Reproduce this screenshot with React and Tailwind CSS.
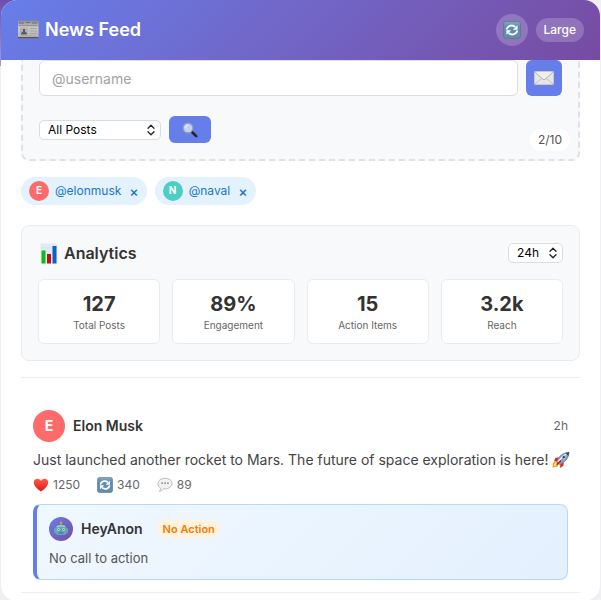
import React from "react";

function NewspaperIcon() {
  return (
    <svg width="22" height="22" viewBox="0 0 22 22" aria-hidden="true">
      <defs>
        <linearGradient id="paper" x1="0" y1="0" x2="0" y2="1">
          <stop offset="0" stopColor="#8c8c8c" />
          <stop offset="0.4" stopColor="#c9c9c9" />
          <stop offset="1" stopColor="#b4b4b4" />
        </linearGradient>
      </defs>
      <rect x="1" y="1.5" width="20.500" height="18" rx="1" fill="url(#paper)" />
      <rect x="1" y="18" width="20.500" height="1.500" fill="#55565a" />
      <path d="M2 4h5M15 4h5M9 3.500h4" stroke="#6d6d6d" strokeWidth="1" />
      <path d="M2 6.500h18.500" stroke="#8a8a8a" strokeWidth="0.800" />
      <rect x="3" y="8.500" width="8" height="7" fill="#b0b0b0" />
      <path d="M4 15.500c0-2 1-2.500 2-3V10h2v2.500c1 .5 2 1 2 3z" fill="#5b5b5b" />
      <path d="M12.500 9.500h7.500M12.500 12h7.500M12.500 14.500h7.500M3 17h17" stroke="#a0a0a0" strokeWidth="0.800" />
    </svg>
  );
}

function RefreshIcon({ className }) {
  return (
    <svg className={className} viewBox="0 0 18 18" aria-hidden="true">
      <defs>
        <linearGradient id="refresh" x1="0" y1="0" x2="0" y2="1">
          <stop offset="0" stopColor="#86a9c2" />
          <stop offset="0.3" stopColor="#5f8cae" />
          <stop offset="0.7" stopColor="#5f8fb0" />
          <stop offset="1" stopColor="#6a8aa2" />
        </linearGradient>
      </defs>
      <rect x="0.5" y="0.5" width="17" height="17" rx="2.500" fill="url(#refresh)" stroke="#56758f" strokeWidth="0.700" />
      <path d="M3.800 8.500C4.200 5.300 8.800 3 12.300 6M14.200 9.500c-.4 3.200-5 5.500-8.500 2.500" fill="none" stroke="#fff" strokeWidth="1.900" />
      <path d="M14.600 4.200v4.500h-4.800zM3.400 13.800V9.300h4.800z" fill="#fff" />
    </svg>
  );
}

function EnvelopeIcon() {
  return (
    <svg width="20" height="14" viewBox="0 0 20 14" aria-hidden="true">
      <rect x="0.5" y="0.5" width="19" height="13" rx="0.8" fill="#e6e6e6" stroke="#c8c8c8" />
      <path d="M1 13l7-6M19 13l-7-6" stroke="#c2c2c2" fill="none" />
      <path d="M1 1l7.800 7.200q1.200 1 2.400 0L19 1z" fill="#efefef" />
      <path d="M1 1l7.800 7.200q1.200 1 2.400 0L19 1" fill="none" stroke="#adadad" strokeWidth="0.900" />
    </svg>
  );
}

function SearchIcon() {
  return (
    <svg width="16" height="16" viewBox="0 0 16 16" aria-hidden="true">
      <path d="M9 9l2 2" stroke="#b9bcc4" strokeWidth="1.600" />
      <path d="M10.500 10.500l3.700 3.700" stroke="#25262b" strokeWidth="2.600" strokeLinecap="round" />
      <circle cx="6" cy="6" r="4.800" fill="#c3d0f2" stroke="#9a9fb0" strokeWidth="1.200" />
      <path d="M3.500 6A2.600 2.600 0 0 1 6 3.300" stroke="#eef3ff" fill="none" />
    </svg>
  );
}

function ChartIcon() {
  return (
    <svg width="18" height="21" viewBox="0 0 18 21" aria-hidden="true">
      <rect x="0.500" y="0.500" width="17" height="20" fill="#e0ebf4" />
      <path d="M1 5h16M1 10h16M1 15h16" stroke="#cddbe6" strokeWidth="0.700" />
      <rect x="1.500" y="7.500" width="4" height="13" fill="#12b71e" />
      <rect x="7" y="11" width="4" height="9.500" fill="#c20d12" />
      <rect x="12.500" y="3" width="4" height="17.500" fill="#105fc4" />
    </svg>
  );
}

function HeartIcon() {
  return (
    <svg width="16" height="16" viewBox="0 0 16 16" aria-hidden="true">
      <defs>
        <linearGradient id="heart" x1="0" y1="0" x2="0" y2="1">
          <stop offset="0" stopColor="#ff5a4a" />
          <stop offset="1" stopColor="#e01a12" />
        </linearGradient>
      </defs>
      <path d="M8 14.500C5.500 12.500 .8 9.500.8 5.400.8 1.300 6 .6 8 4c2-3.400 7.200-2.700 7.200 1.400 0 4.100-4.700 7.100-7.200 9.100z" fill="url(#heart)" />
    </svg>
  );
}

function CommentIcon() {
  return (
    <svg width="16" height="16" viewBox="0 0 16 16" aria-hidden="true">
      <path d="M8 1.300c4 0 7 2.200 7 5.200s-3 5.300-7 5.300l-1.500-.1c-1 1.500-2.600 2.500-4.300 2.700 1-.9 1.400-2 1.300-3.300C1.900 10.200 1 8.500 1 6.500c0-3 3-5.200 7-5.200z" fill="#f1f1f1" stroke="#b5b5b5" strokeWidth="0.900" />
      <path d="M4.500 6.200h1.300M7.400 6.200h1.300M10.300 6.200h1.300" stroke="#555" strokeWidth="1.300" />
    </svg>
  );
}

function RocketIcon() {
  return (
    <svg className="inline-block align-[-4px]" width="18" height="18" viewBox="0 0 19 18" aria-hidden="true">
      <path d="M5 10l-4 2-.5 5 5-1 2-3z" fill="#ff9d1b" />
      <path d="M4.500 11.500l-2 1.500-.5 2.500 3-1z" fill="#fff07a" />
      <path d="M7 6L3.500 7 2 10.500l3.500-.5zM12.500 11l-.5 4-3.500 2.500.2-4z" fill="#d92c1f" />
      <path d="M5 11C7 5 11 1.500 18 .8c-.4 6.500-4.500 10.700-10 13z" fill="#7fa4cd" stroke="#59677c" strokeWidth="0.700" />
      <path d="M6.500 11.500C9 7 12 4 17 1.800" stroke="#edf4fb" strokeWidth="1.600" fill="none" />
      <path d="M14 1.600l4-.8-.7 4z" fill="#33445f" />
      <circle cx="12.500" cy="6" r="1.700" fill="#2d3d58" stroke="#dce6f1" strokeWidth="0.700" />
      <path d="M9.500 9.500L5 14" stroke="#bd2119" strokeWidth="1.700" />
    </svg>
  );
}

function RobotIcon() {
  return (
    <svg width="14" height="16" viewBox="0 0 14 16" aria-hidden="true">
      <path d="M7 2v3" stroke="#b8894a" strokeWidth="1.200" />
      <circle cx="7" cy="1.800" r="1.200" fill="#e39a3c" />
      <rect x="0" y="7" width="2" height="5" rx="1" fill="#6fa0a8" />
      <rect x="12" y="7" width="2" height="5" rx="1" fill="#6fa0a8" />
      <path d="M1.500 7Q2 4 7 4t5.500 3v5.500Q12 14 7 14t-5.500-1.500z" fill="#5cabb8" />
      <path d="M3 5.500q4-1.500 8 0" stroke="#b5dfe2" strokeWidth="1.200" fill="none" />
      <circle cx="4.500" cy="8.500" r="1.200" fill="#c6e6e8" />
      <circle cx="9.500" cy="8.500" r="1.200" fill="#c6e6e8" />
      <circle cx="4.500" cy="8.500" r="0.600" fill="#a0555a" />
      <circle cx="9.500" cy="8.500" r="0.600" fill="#a0555a" />
      <path d="M7 9l-.8 1.500h1.600z" fill="#c75345" />
      <path d="M4.500 12h5" stroke="#2f7280" strokeWidth="1" />
    </svg>
  );
}

function Select({ label, options, className }) {
  return (
    <div className={`relative ${className}`}>
      <select
        aria-label={label}
        className="block h-5 w-full appearance-none rounded-[5px] border border-[#dcdcdc] bg-white pl-2 text-xs leading-4 text-black"
      >
        {options.map((o) => (
          <option key={o}>{o}</option>
        ))}
      </select>
      <svg className="pointer-events-none absolute top-1 right-1.5" width="8" height="12" viewBox="0 0 8 12" fill="none" stroke="#222" strokeWidth="1.300" strokeLinecap="round" strokeLinejoin="round" aria-hidden="true">
        <path d="M1 4.300L4 1.300l3 3M1 7.700l3 3 3-3" />
      </svg>
    </div>
  );
}

const accounts = [
  { initial: "E", handle: "@elonmusk", color: "bg-[#ff6b6b]" },
  { initial: "N", handle: "@naval", color: "bg-[#4ecdc4]" },
];

const metrics = [
  { value: "127", label: "Total Posts" },
  { value: "89%", label: "Engagement" },
  { value: "15", label: "Action Items" },
  { value: "3.2k", label: "Reach" },
];

function Composer() {
  return (
    <section className="relative rounded-b-lg border-2 border-t-0 border-dashed border-[#dee2e6] bg-[#f8f9fb] px-4 pb-4">
      <div className="flex gap-2">
        <input
          aria-label="Username"
          placeholder="@username"
          className="h-9 min-w-0 flex-1 rounded-md border border-[#dddddd] bg-white px-3 text-sm text-[#333] placeholder:text-[#a3a3a3]"
        />
        <button aria-label="Send" className="flex size-9 items-center justify-center rounded-md bg-[#667eea]">
          <EnvelopeIcon />
        </button>
      </div>
      <div className="mt-5 flex items-center gap-2">
        <Select label="Post filter" options={["All Posts"]} className="w-[122px]" />
        <button aria-label="Search" className="flex h-[27px] w-[42px] items-center justify-center rounded-md bg-[#667eea]">
          <SearchIcon />
        </button>
      </div>
      <span className="absolute right-2 bottom-2 rounded-full bg-white px-2 py-px text-xs leading-5 text-[#555]">
        2/10
      </span>
    </section>
  );
}

function Accounts() {
  return (
    <ul className="mt-4 flex gap-2">
      {accounts.map((a) => (
        <li key={a.handle} className="flex h-7 items-center rounded-full bg-[#e3f2fd] px-2 text-xs text-[#1976d2]">
          <span className={`flex size-5 items-center justify-center rounded-full text-[10px] font-bold text-white ${a.color}`}>
            {a.initial}
          </span>
          <span className="ml-1.5">{a.handle}</span>
          <button aria-label={`Remove ${a.handle}`} className="ml-2 pt-0.5 text-sm leading-4 font-medium">
            ×
          </button>
        </li>
      ))}
    </ul>
  );
}

function Analytics() {
  return (
    <section className="mt-5 rounded-lg border border-[#e9ecef] bg-[#f8f9fb] p-4">
      <div className="flex h-[22px] items-center justify-between">
        <h2 className="flex items-center gap-1.5 pl-0.5 text-base font-semibold text-[#333]">
          <ChartIcon />
          Analytics
        </h2>
        <Select label="Time range" options={["24h"]} className="w-[55px]" />
      </div>
      <dl className="mt-[15px] grid grid-cols-4 gap-3">
        {metrics.map((m) => (
          <div key={m.label} className="flex flex-col-reverse gap-0.5 rounded-md border border-[#e9ecef] bg-white pt-3 pb-2.5 text-center">
            <dt className="text-[10px] leading-[15px] text-[#666]">{m.label}</dt>
            <dd className="text-xl leading-6 font-bold text-[#333]">{m.value}</dd>
          </div>
        ))}
      </dl>
    </section>
  );
}

function Post() {
  return (
    <article className="mt-4 border-y border-[#eeeeee] px-3 pt-8 pb-3">
      <header className="flex items-center">
        <span className="flex size-8 items-center justify-center rounded-full bg-[#ff6b6b] text-sm font-bold text-white">E</span>
        <h3 className="ml-2 text-sm font-semibold text-[#333]">Elon Musk</h3>
        <time className="ml-auto text-xs text-[#666]">2h</time>
      </header>
      <p className="mt-2 -mr-3 text-sm leading-5 text-[#444]">
        Just launched another rocket to Mars. The future of space exploration is here! <RocketIcon />
      </p>
      <div className="mt-[7px] flex gap-[17px] text-xs leading-4 text-[#666]">
        <span className="flex items-center gap-1"><HeartIcon />1250</span>
        <span className="flex items-center gap-1"><RefreshIcon className="size-4" />340</span>
        <span className="flex items-center gap-1"><CommentIcon />89</span>
      </div>
      <div className="mt-[11px] rounded-lg border border-l-4 border-[#b3d9ff] border-l-[#667eea] bg-linear-135 from-[#f0f8ff] to-[#e4f0fe] p-3">
        <div className="flex items-center">
          <span className="flex size-6 items-center justify-center rounded-full bg-linear-135 from-[#667eea] to-[#764ba2]">
            <RobotIcon />
          </span>
          <h4 className="ml-2 text-sm font-semibold text-[#333]">HeyAnon</h4>
          <span className="ml-3.5 rounded-full bg-[#fff3e0] px-1.5 text-[11px] leading-[18px] font-semibold text-[#f57c00]">No Action</span>
        </div>
        <p className="mt-2 text-[13px] leading-[18px] text-[#555]">No call to action</p>
      </div>
    </article>
  );
}

export default function App() {
  return (
    <div className="h-screen overflow-hidden bg-[#f0f0f2] bg-[linear-gradient(#6a4fae,#a99ad0)] bg-size-[16px_66px] bg-no-repeat px-px font-[Inter,'Liberation_Sans',sans-serif]">
      <div className="overflow-hidden rounded-2xl bg-white">
        <header className="flex h-15 items-center justify-between bg-linear-135 from-[#667eea] to-[#764ba2] px-4 text-white">
          <h1 className="flex items-center gap-1.5 text-lg font-semibold">
            <NewspaperIcon />
            News Feed
          </h1>
          <div className="flex items-center gap-2">
            <button aria-label="Refresh" className="flex size-8 items-center justify-center rounded-full bg-white/20">
              <RefreshIcon className="size-[18px]" />
            </button>
            <button className="h-6 rounded-full bg-white/20 px-2 text-xs font-medium">Large</button>
          </div>
        </header>
        <main className="px-5 pb-2">
          <Composer />
          <Accounts />
          <Analytics />
          <Post />
        </main>
      </div>
    </div>
  );
}
